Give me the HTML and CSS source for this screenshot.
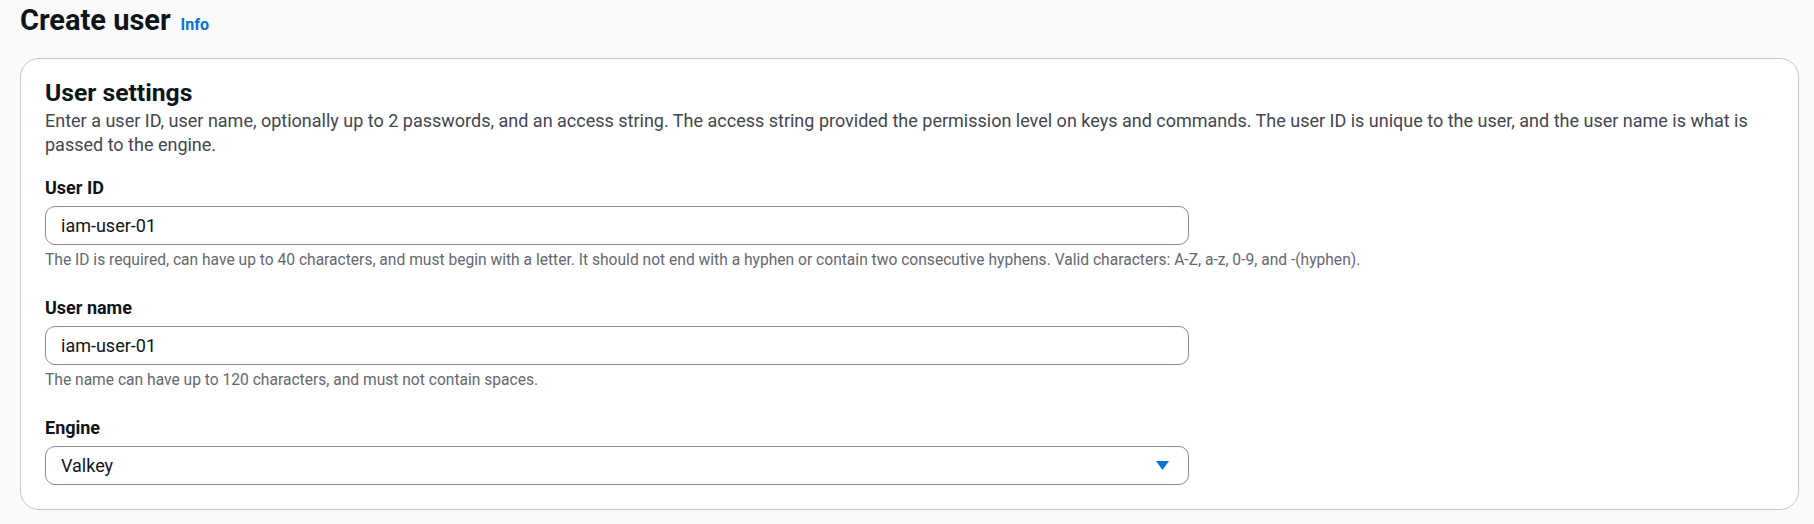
FILE: index.html
```html
<!DOCTYPE html>
<html lang="en">
<head>
<meta charset="utf-8">
<title>Create user</title>
<link rel="stylesheet" href="styles.css">
</head>
<body>
<main class="page">
  <header class="page-header">
    <h1 class="page-title">Create user</h1>
    <a class="info-link" href="#">Info</a>
  </header>

  <section class="card">
    <div class="card-header">
      <h2 class="card-title">User settings</h2>
      <p class="card-desc">Enter a user ID, user name, optionally up to 2 passwords, and an access string. The access string provided the permission level on keys and commands. The user ID is unique to the user, and the user name is what is passed to the engine.</p>
    </div>

    <div class="form">
      <div class="field">
        <label class="field-label" for="uid">User ID</label>
        <input class="field-input" id="uid" type="text" value="iam-user-01">
        <div class="field-hint">The ID is required, can have up to 40 characters, and must begin with a letter. It should not end with a hyphen or contain two consecutive hyphens. Valid characters: A-Z, a-z, 0-9, and -(hyphen).</div>
      </div>

      <div class="field">
        <label class="field-label" for="uname">User name</label>
        <input class="field-input" id="uname" type="text" value="iam-user-01">
        <div class="field-hint">The name can have up to 120 characters, and must not contain spaces.</div>
      </div>

      <div class="field">
        <span class="field-label">Engine</span>
        <div class="field-select">
          <span class="select-value">Valkey</span>
          <svg class="select-caret" width="13" height="9" viewBox="0 0 13 9" aria-hidden="true"><polygon points="0,0 13,0 6.5,9" fill="#0972d3"/></svg>
        </div>
      </div>
    </div>
  </section>
</main>
</body>
</html>
```

FILE: styles.css
```css
* { box-sizing: border-box; }

html, body {
  margin: 0;
  padding: 0;
  background: #fafafa;
}

body {
  font-family: Roboto, "Open Sans", Arial, sans-serif;
  color: #0f141a;
  font-size: 18px;
  line-height: 24px;
}

.page {
  padding: 3px 15px 0 20px;
  width: 1814px;
  height: 524px;
}

.page-header {
  display: flex;
  align-items: baseline;
  gap: 10px;
  height: 35px;
}

.page-title {
  margin: 0;
  font-size: 29px;
  line-height: 35px;
  font-weight: 700;
}

.info-link {
  font-size: 16px;
  font-weight: 700;
  color: #0972d3;
  text-decoration: none;
}

.card {
  margin-top: 20px;
  background: #ffffff;
  border: 1px solid #c6c6cd;
  border-radius: 19px;
  padding: 20px 24px 24px 24px;
}

.card-title {
  margin: 0;
  font-size: 24.7px;
  line-height: 28px;
  font-weight: 700;
}

.card-desc {
  margin: 2px 0 0 0;
  color: #424650;
  font-size: 18px;
  line-height: 24px;
}

.form {
  margin-top: 19px;
  display: flex;
  flex-direction: column;
  gap: 27px;
}

.field {
  display: flex;
  flex-direction: column;
}

.field-label {
  display: block;
  font-weight: 700;
  font-size: 18px;
  line-height: 23px;
  margin-bottom: 7px;
}

.field-input,
.field-select {
  width: 1144px;
  height: 39px;
  border: 1px solid #8c8c94;
  border-radius: 10px;
  background: #ffffff;
  padding: 0 15px;
  font-family: inherit;
  font-size: 18px;
  color: #0f141a;
  outline: none;
}

.field-select {
  display: flex;
  align-items: center;
  justify-content: space-between;
  padding-right: 19px;
}

.select-caret {
  display: block;
}

.field-hint {
  margin-top: 6px;
  font-size: 15.6px;
  line-height: 18px;
  color: #656871;
}
```
